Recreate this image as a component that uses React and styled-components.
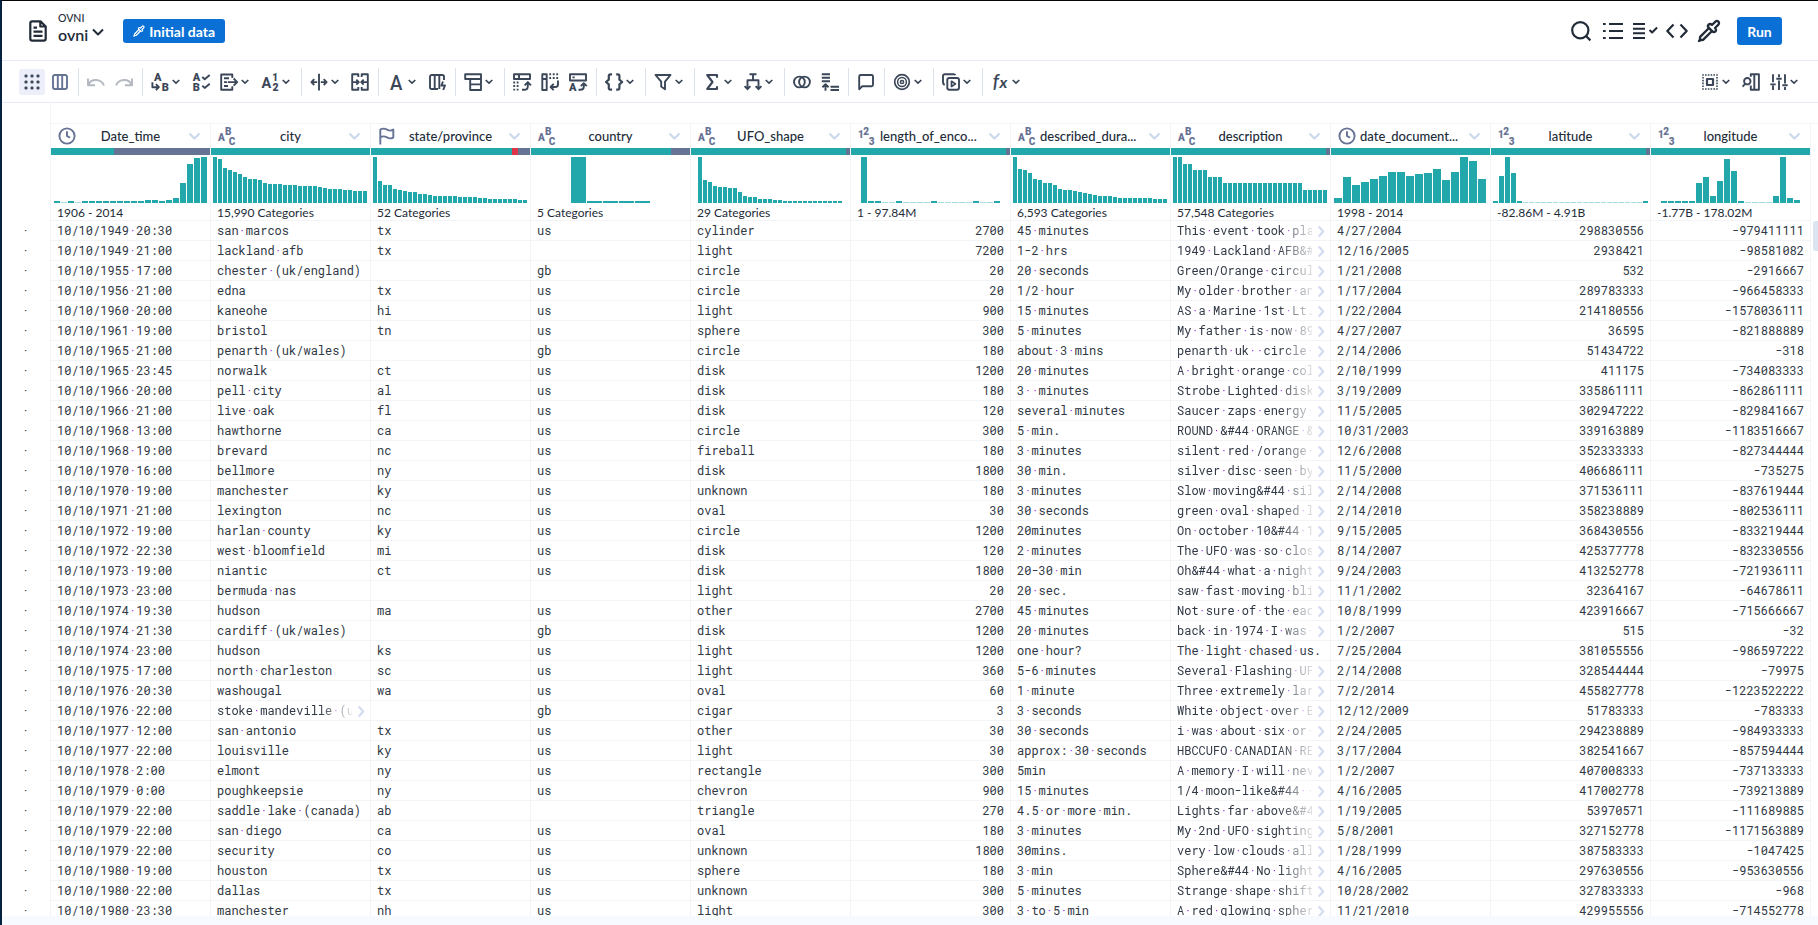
import React from "react";
import styled, { createGlobalStyle } from "styled-components";
import { Pipette } from "lucide-react";

const GlobalStyle = createGlobalStyle`
  * { box-sizing: border-box; }
  body { margin: 0; background: #fff; overflow: hidden; }
`;

const color = {
  ink: "#222b38",
  tool: "#3b4758",
  slate: "#667394",
  teal: "#22a8ab",
  red: "#dc3547",
  line: "#f3f4f7",
  rule: "#e6ebf5",
  blue: "#0b70d5",
};

const Page = styled.div`
  display: flex;
  flex-direction: column;
  width: 1818px;
  height: 925px;
  border-top: 1px solid #05060a;
  border-left: 2px solid #04223f;
  background: #fff;
  color: ${color.ink};
  font-family: Lato, "Liberation Sans", sans-serif;
  overflow: hidden;
`;

const Header = styled.header`
  display: flex;
  align-items: center;
  height: 60px;
  padding: 1px 36px 0 27px;
  border-bottom: 1px solid ${color.rule};
`;

const Titles = styled.div`
  display: flex;
  flex-direction: column;
  margin-left: 11px;
  padding-bottom: 6px;
`;

const Project = styled.span`
  font-size: 10.5px;
  font-weight: 500;
  line-height: 14px;
`;

const FileName = styled.span`
  display: flex;
  align-items: center;
  gap: 4px;
  height: 20px;
  font-size: 16px;
  font-weight: 600;
  line-height: 20px;

  svg { margin: -7px 1px 0 0; }
`;

const Button = styled.button`
  display: flex;
  align-items: center;
  justify-content: center;
  gap: 4px;
  width: ${(p) => p.$width}px;
  height: ${(p) => p.$height}px;
  margin-left: ${(p) => p.$left}px;
  padding: 0;
  border: 0;
  border-radius: 3px;
  background: ${color.blue};
  color: #fff;
  font: 700 ${(p) => p.$size || 14}px Lato, sans-serif;
`;

const Spacer = styled.div`
  flex: 1;
`;

const Toolbar = styled.nav`
  display: flex;
  align-items: center;
  height: 42px;
  padding: 1px 20px 0 17px;
  border-bottom: 1px solid ${color.rule};
`;

const ActiveTool = styled.div`
  display: flex;
  align-items: center;
  justify-content: center;
  width: 26px;
  height: 26px;
  border-radius: 3px;
  background: #eceffa;
`;

const Divider = styled.i`
  width: 1px;
  height: 28px;
  margin-left: ${(p) => p.$left}px;
  background: #dbe2ee;
`;

const Glyph = styled.svg`
  flex: none;
  display: block;
  overflow: visible;
  margin-left: ${(p) => p.$left || 0}px;
  fill: none;
  stroke: ${(p) => p.$color || color.tool};
  stroke-width: ${(p) => p.$stroke || 1.9};
  stroke-linejoin: round;

  text {
    fill: ${(p) => p.$color || color.tool};
    stroke: none;
    font-family: Roboto, "Liberation Sans", sans-serif;
    font-weight: 900;
    font-size: 11px;
  }
`;

const Sheet = styled.main`
  display: flex;
  height: 813px;
  overflow: hidden;
`;

const Grid = styled.div`
  width: 1809px;
`;

const Band = styled.div`
  height: 20px;
  margin-left: 48px;
  border-left: 1px solid ${color.line};
`;

const HeadRow = styled.div`
  display: flex;
  padding-left: 48px;
`;

const ColumnHead = styled.div`
  flex: none;
  width: 160px;
  border-left: 1px solid ${color.line};
  border-top: 1px solid ${color.line};
`;

const TitleRow = styled.div`
  display: flex;
  align-items: center;
  height: 24px;
  padding-left: 7px;
`;

const ColumnName = styled.span`
  width: 101px;
  margin: 0 7px 0 4px;
  white-space: nowrap;
  text-align: ${(p) => (p.$cut ? "left" : "center")};
  font-size: 13px;
  font-weight: 500;
  line-height: 20px;
`;

const Quality = styled.div`
  display: flex;
  height: 7px;
`;

const QualityPart = styled.i`
  flex: ${(p) => p.$size} 0 0;
  background: ${(p) => color[p.$kind]};
`;

const Chart = styled.div`
  display: flex;
  align-items: flex-end;
  gap: 1px;
  height: 48px;
  padding-left: ${(p) => p.$left}px;
`;

const ChartBar = styled.i`
  width: ${(p) => p.$width}px;
  height: ${(p) => p.$value || 1}px;
  background: ${(p) => (p.$value ? color.teal : "#a6dcdd")};
`;

const Summary = styled.div`
  height: 17px;
  padding-left: 6px;
  font-size: 12px;
  line-height: 20px;
  white-space: nowrap;
`;

const Row = styled.div`
  display: flex;
  height: 20px;
  font: 12px/18px "Roboto Mono", "Liberation Mono", monospace;
  color: #303845;
`;

const Gutter = styled.div`
  flex: none;
  width: 48px;
  padding: 1px 0 0 20px;
`;

const Cell = styled.div`
  flex: none;
  display: flex;
  align-items: center;
  justify-content: ${(p) => (p.$numeric ? "flex-end" : "flex-start")};
  width: 160px;
  height: 20px;
  padding: 0 6px 1px;
  border-left: 1px solid ${color.line};
  border-top: 1px solid ${color.line};
  white-space: nowrap;
`;

const EndLine = styled.i`
  flex: none;
  width: 1px;
  background: ${color.line};
`;

const Faded = styled.span`
  width: 135px;
  margin-right: 6px;
  overflow: hidden;
  mask-image: linear-gradient(to right, #000 102px, rgba(0, 0, 0, 0.15) 135px);
`;

const SpaceDot = styled.span`
  color: #a030f5;
`;

const Track = styled.div`
  flex: 1;
  padding: 118px 0 0 2px;
  background: linear-gradient(${color.line}, ${color.line}) 0 20px / 100% 1px no-repeat;
`;

const Thumb = styled.div`
  height: 30px;
  border-radius: 3px 0 0 3px;
  background: #dde4f1;
`;

const Footer = styled.footer`
  flex: 1;
  background: #f7faff;
`;

function Chevron({ left }) {
  return (
    <Glyph $left={left} width="8" height="8" viewBox="0 0 8 8" $stroke={1.7}>
      <path d="M.7 2 4 5.1 7.3 2" />
    </Glyph>
  );
}

const icons = {
  dots: [2, 8, 14].flatMap((y) => [2, 8, 14].map((x) => <rect key={x + "-" + y} x={x + 0.2} y={y + 0.2} width="1.6" height="1.6" rx=".5" strokeWidth="1.5" />)),
  columns: <path d="M4 2h10a2 2 0 0 1 2 2v10a2 2 0 0 1-2 2H4a2 2 0 0 1-2-2V4a2 2 0 0 1 2-2zM6.8 2v14M11.2 2v14" />,
  undo: <path d="M1 5.5v6.7h7M1.4 11.8C4 5.2 14 5.2 17 12.5" />,
  redo: <path d="M17 5.5v6.7h-7M16.6 11.8C14 5.2 4 5.2 1 12.5" />,
  rename: (
    <>
      <text x="3" y="8">A</text>
      <text x="10.8" y="17.7">B</text>
      <path d="M1.4 9.2v5h6M4.9 11.2l3 3-3 3" />
    </>
  ),
  retype: (
    <>
      <text x=".8" y="8">A</text>
      <text x=".8" y="17.7">B</text>
      <path d="m10.3 4 2.4 2.2 5-4.2M10.3 12.7l2.4 2.2 5-4.2" />
    </>
  ),
  extract: <path d="M12.3 5V1.5H1.2v15.3h11.1v-3.5M4 5.3h5M4 9.1h3M4 13h4M7.8 9.1h9M13.6 5.5l3.6 3.6-3.6 3.6" />,
  order: (
    <>
      <text x="-.4" y="15" style={{ fontSize: 14.5, fontWeight: 700 }}>A</text>
      <text x="10.2" y="8" style={{ fontSize: 10 }}>1</text>
      <text x="10.4" y="17.6" style={{ fontSize: 10.5 }}>2</text>
    </>
  ),
  split: <path d="M9 .7v16.8M7.2 9.1H1.5M4.3 6.2 1.4 9.1 4.3 12M10.8 9.1h5.7M13.7 6.2l2.9 2.9-2.9 2.9" />,
  merge: <path d="M7.3 4V1.3H1.2v15.5h6.1v-2.7M10.7 4V1.3h6.1v15.5h-6.1v-2.7M1.5 9.1h6M5.3 6.6 7.8 9.1l-2.5 2.5M16.5 9.1h-6M12.7 6.6l-2.5 2.5 2.5 2.5" />,
  text: <text x="3" y="16.8" textLength="12.4" lengthAdjust="spacingAndGlyphs" style={{ fontSize: 21, fontWeight: 500 }}>A</text>,
  enrich: <path d="M10 16H3.8A1.8 1.8 0 0 1 2 14.2V3.8A1.8 1.8 0 0 1 3.8 2h10.4A1.8 1.8 0 0 1 16 3.8V7M6.7 2v14M11.3 2v14M15 8.5l-1.6 4h3.6L15.2 17" />,
  rows: <path d="M1.2 1.2h15.8v4.8H1.2zM6.2 6h10.8v5.4H6.2zM6.2 11.4h10.8v5.6H6.2z" />,
  unpivot: (
    <>
      <path d="M1 1.3h16v4.7H1zM6 1.3V6" />
      <path d="M9 16.8h2.2q3.6 0 3.6-3.3V9.5M11.6 12.3l3.2-3.2 3.2 3.2" />
      <path d="M.3 9.5h6.5M.3 13h6.5M.3 16.6h6.5" strokeDasharray="1.8 1.6" />
    </>
  ),
  pivot: (
    <>
      <path d="M1.3 1.3h4.4v15.7H1.3zM1.3 6h4.4" />
      <path d="M8.3 1.3h9.7M8.3 5h9.7" strokeDasharray="1.8 1.7" />
      <path d="M17 7.5V11.2q0 2.8-2.8 2.8H10M12.7 10.9l-3.1 3.1 3.1 3.1" />
    </>
  ),
  header: (
    <>
      <path d="M1 1.3h16v6.2H1zM3.5 4.4h2.2" />
      <text x="0" y="17.6">A</text>
      <path d="M9.5 16.8h1.9q3.4 0 3.4-3v-3M11.8 13.2l3-3 3 3" />
    </>
  ),
  braces: <path d="M7 1.3H5.5Q3.8 1.3 3.8 3v3.7L1 9l2.8 2.3V15q0 1.7 1.7 1.7H7M11.2 1.3h1.5q1.7 0 1.7 1.7v3.7L17.2 9l-2.8 2.3V15q0 1.7-1.7 1.7h-1.5" strokeWidth="2.2" />,
  filter: <path d="M1.5 2h15L11 8.7v7.6L7.2 13.5V8.7z" />,
  sigma: <path d="M14 4.7V2H4.2l5.3 7-5.3 7H14v-2.7" strokeWidth="2.1" />,
  tree: <path d="M5.5 1.2h7M9 1.2v6M3.5 15.5V7.2h11v8.3M.6 13.2l2.9 3 2.9-3M11.6 13.2l2.9 3 2.9-3" />,
  join: (
    <>
      <circle cx="6.4" cy="9" r="5.4" />
      <circle cx="11.5" cy="9" r="5.4" />
    </>
  ),
  union: <path d="M.8 1.2h8.2M.8 4.7h8.2M.8 8.2h8.2M4.5 17.7v-6M1.4 14.3l3.1-3 3.1 3M9.5 13.7h8.5M9.5 17h8.5" />,
  comment: <path d="M2.2 16.2V3.5Q2.2 2 3.7 2h10.8q1.5 0 1.5 1.5v8.3q0 1.5-1.5 1.5H5.3z" />,
  target: (
    <>
      <circle cx="9" cy="9" r="7.3" strokeWidth="1.7" />
      <circle cx="9" cy="9" r="4.4" strokeWidth="1.5" />
      <circle cx="9" cy="9" r="1.6" strokeWidth="1.5" />
    </>
  ),
  play: (
    <>
      <path d="M2.8 11.7Q1 11.3 1 9.5V3q0-1.8 1.8-1.8h8.9q1.2 0 1.7 1" />
      <rect x="5.3" y="5" width="11.7" height="11.8" rx="2" />
      <path d="M9.5 8.3v5.2l4-2.6z" strokeWidth="1.7" />
    </>
  ),
  formula: (
    <>
      <text x="1.8" y="14.5" style={{ fontFamily: "Lato", fontSize: 19, fontWeight: 600, fontStyle: "italic" }}>f</text>
      <text x="8.5" y="15" style={{ fontFamily: "Lato", fontSize: 16, fontWeight: 700, fontStyle: "italic" }}>x</text>
    </>
  ),
  select: (
    <>
      <path d="M1.2 2h16M1.2 16h16M2 1.2v16M16 1.2v16" strokeDasharray="1.6 1.2" strokeWidth="1.6" />
      <rect x="6" y="6" width="6" height="6" strokeWidth="2.2" />
    </>
  ),
  findColumn: (
    <>
      <circle cx="5.3" cy="8.2" r="3.2" />
      <path d="M3 10.7.7 13.8M8.8 3.8V1.3h8.1v15.5H8.8v-4.3M12.3 1.3v15.5" />
    </>
  ),
  sliders: <path d="M3 1.2v8M3 12.5v4.5M.3 11.4h5.4M9 1.2v3M9 7.5V17M6.3 5.7h5.4M15 1.2v9.2M15 14v3M12.3 12.2h5.4" />,
};

// [icon, left margin, margin before its dropdown chevron]; "|" marks a divider.
const TOOLS = [
  ["|", 9], ["undo", 8], ["redo", 10],
  ["|", 9], ["rename", 8, 3], ["retype", 12], ["extract", 10, 3], ["order", 13, 2],
  ["|", 11], ["split", 8, 3], ["merge", 12],
  ["|", 9], ["text", 8, 3], ["enrich", 12],
  ["|", 9], ["rows", 8, 3],
  ["|", 11], ["unpivot", 8], ["pivot", 10], ["header", 10],
  ["|", 9], ["braces", 8, 3],
  ["|", 11], ["filter", 8, 3],
  ["|", 11], ["sigma", 8, 3], ["tree", 12, 3],
  ["|", 11], ["join", 8], ["union", 10],
  ["|", 9], ["comment", 8],
  ["|", 9], ["target", 8, 3],
  ["|", 11], ["play", 8, 3],
  ["|", 11], ["formula", 8, 3],
];

function Tool({ name, left, chevron, tint }) {
  return (
    <>
      <Glyph $left={left} $color={tint} width="18" height="18" viewBox="0 0 18 18">{icons[name]}</Glyph>
      {chevron != null && <Chevron left={chevron} />}
    </>
  );
}

const typeIcons = {
  date: <><circle cx="9" cy="9" r="7.6" /><path d="M9 4.3V9l3 1.6" /></>,
  flag: <path d="M2.3 17.5V2.6Q5.5.6 9 2.6t6.3 0v7.8Q12.5 12.4 9 10.4t-6.7 0" />,
  text: <><text x="0" y="14">A</text><text x="7" y="7.6">B</text><text x="10.8" y="17.5">C</text></>,
  number: <><text x="0" y="11">1</text><text x="5.3" y="7.6">2</text><text x="10.7" y="17.5">3</text></>,
};

const TypeGlyph = styled(Glyph)`
  text { font-size: 10px; }
`;

const fill = (n, v) => Array(n).fill(v);

const COLUMNS = [
  { name: "Date_time", type: "date", parts: [["teal", 63], ["slate", 96]], left: 3, bar: 6, label: "1906 - 2014",
    values: [2, 0, 2, 0, ...fill(9, 2), 3, 3, 2, 3, 5, 20, 39, 45, 46] },
  { name: "city", type: "text", parts: [["teal", 159]], left: 2, bar: 4, label: "15,990 Categories",
    values: [46, 44, 35, 33, 31, 29, 26, 24, 24, 23, 20, 19, 19, 19, 18, 18, 18, 17, 17, 17, 17, 16, 15, 14, 14, 14, 13, 13, 12, 12, 12] },
  { name: "state/province", type: "flag", parts: [["teal", 141], ["red", 6], ["slate", 12]], left: 2, bar: 4, label: "52 Categories",
    values: [46, 22, 18, 18, 14, 13, 12, 11, 11, 9, 9, 8, ...fill(5, 7), ...fill(4, 6), 5, 5, ...fill(6, 4), 3, 3] },
  { name: "country", type: "text", parts: [["teal", 140], ["slate", 19]], left: 40, bar: 15, label: "5 Categories",
    values: [46, 2, 2, 2, 2] },
  { name: "UFO_shape", type: "text", parts: [["teal", 155], ["slate", 4]], left: 7, bar: 4, label: "29 Categories",
    values: [46, 23, 21, 17, 16, 16, 15, 15, 11, 7, 6, 6, 4, 4, 4, 3, 3, ...fill(12, 2)] },
  { name: "length_of_enco...", cut: true, numeric: true, type: "number", parts: [["teal", 155], ["slate", 4]], left: 10, bar: 6, label: "1 - 97.84M",
    values: [46, 2, 2, 0, 0, 2, 0, 0, 0, 0, 2, 0, 0, 0, 0, 0, 2, 0, 0, 2] },
  { name: "described_dura...", cut: true, type: "text", parts: [["teal", 159]], left: 2, bar: 4, label: "6,593 Categories",
    values: [46, 34, 33, 30, 24, 23, 20, 20, 18, 14, 13, 13, 12, 11, 10, 9, 8, 7, 7, 7, 6, ...fill(7, 5), 4, 4, 4] },
  { name: "description", type: "text", parts: [["teal", 155], ["slate", 4]], left: 2, bar: 4, label: "57,548 Categories",
    values: [46, 46, 39, 39, 33, 33, 33, 26, 26, 26, ...fill(16, 20), ...fill(5, 13)] },
  { name: "date_document...", cut: true, type: "date", parts: [["teal", 159]], left: 3, bar: 8, label: "1998 - 2014",
    values: [5, 26, 18, 21, 24, 27, 31, 31, 27, 29, 30, 34, 23, 31, 46, 42, 24] },
  { name: "latitude", numeric: true, type: "number", parts: [["teal", 155], ["slate", 4]], left: 2, bar: 5, label: "-82.86M - 4.91B",
    values: [2, 27, 46, 30, 2, ...fill(20, 0), 2] },
  { name: "longitude", numeric: true, type: "number", parts: [["teal", 159]], left: 10, bar: 6, label: "-1.77B - 178.02M",
    values: [2, 2, 2, 2, 2, 20, 26, 7, 22, 44, 32, 2, 0, 0, 0, 0, 7, 46, 5, 3] },
];

// A trailing ">" marks a value that is longer than its cell.
const ROWS = `
10/10/1949 20:30|san marcos|tx|us|cylinder|2700|45 minutes|This event took pla>|4/27/2004|298830556|-979411111
10/10/1949 21:00|lackland afb|tx||light|7200|1-2 hrs|1949 Lackland AFB&#>|12/16/2005|2938421|-98581082
10/10/1955 17:00|chester (uk/england)||gb|circle|20|20 seconds|Green/Orange circul>|1/21/2008|532|-2916667
10/10/1956 21:00|edna|tx|us|circle|20|1/2 hour|My older brother an>|1/17/2004|289783333|-966458333
10/10/1960 20:00|kaneohe|hi|us|light|900|15 minutes|AS a Marine 1st Lt.>|1/22/2004|214180556|-1578036111
10/10/1961 19:00|bristol|tn|us|sphere|300|5 minutes|My father is now 89>|4/27/2007|36595|-821888889
10/10/1965 21:00|penarth (uk/wales)||gb|circle|180|about 3 mins|penarth uk  circle >|2/14/2006|51434722|-318
10/10/1965 23:45|norwalk|ct|us|disk|1200|20 minutes|A bright orange col>|2/10/1999|411175|-734083333
10/10/1966 20:00|pell city|al|us|disk|180|3  minutes|Strobe Lighted disk>|3/19/2009|335861111|-862861111
10/10/1966 21:00|live oak|fl|us|disk|120|several minutes|Saucer zaps energy >|11/5/2005|302947222|-829841667
10/10/1968 13:00|hawthorne|ca|us|circle|300|5 min.|ROUND &#44 ORANGE &>|10/31/2003|339163889|-1183516667
10/10/1968 19:00|brevard|nc|us|fireball|180|3 minutes|silent red /orange >|12/6/2008|352333333|-827344444
10/10/1970 16:00|bellmore|ny|us|disk|1800|30 min.|silver disc seen by>|11/5/2000|406686111|-735275
10/10/1970 19:00|manchester|ky|us|unknown|180|3 minutes|Slow moving&#44 sil>|2/14/2008|371536111|-837619444
10/10/1971 21:00|lexington|nc|us|oval|30|30 seconds|green oval shaped l>|2/14/2010|358238889|-802536111
10/10/1972 19:00|harlan county|ky|us|circle|1200|20minutes|On october 10&#44 1>|9/15/2005|368430556|-833219444
10/10/1972 22:30|west bloomfield|mi|us|disk|120|2 minutes|The UFO was so clos>|8/14/2007|425377778|-832330556
10/10/1973 19:00|niantic|ct|us|disk|1800|20-30 min|Oh&#44 what a night>|9/24/2003|413252778|-721936111
10/10/1973 23:00|bermuda nas|||light|20|20 sec.|saw fast moving bli>|11/1/2002|32364167|-64678611
10/10/1974 19:30|hudson|ma|us|other|2700|45 minutes|Not sure of the eac>|10/8/1999|423916667|-715666667
10/10/1974 21:30|cardiff (uk/wales)||gb|disk|1200|20 minutes|back in 1974 I was >|1/2/2007|515|-32
10/10/1974 23:00|hudson|ks|us|light|1200|one hour?|The light chased us.|7/25/2004|381055556|-986597222
10/10/1975 17:00|north charleston|sc|us|light|360|5-6 minutes|Several Flashing UF>|2/14/2008|328544444|-79975
10/10/1976 20:30|washougal|wa|us|oval|60|1 minute|Three extremely lar>|7/2/2014|455827778|-1223522222
10/10/1976 22:00|stoke mandeville (u>||gb|cigar|3|3 seconds|White object over B>|12/12/2009|51783333|-783333
10/10/1977 12:00|san antonio|tx|us|other|30|30 seconds|i was about six or >|2/24/2005|294238889|-984933333
10/10/1977 22:00|louisville|ky|us|light|30|approx: 30 seconds|HBCCUFO CANADIAN RE>|3/17/2004|382541667|-857594444
10/10/1978 2:00|elmont|ny|us|rectangle|300|5min|A memory I will nev>|1/2/2007|407008333|-737133333
10/10/1979 0:00|poughkeepsie|ny|us|chevron|900|15 minutes|1/4 moon-like&#44  >|4/16/2005|417002778|-739213889
10/10/1979 22:00|saddle lake (canada)|ab||triangle|270|4.5 or more min.|Lights far above&#4>|1/19/2005|53970571|-111689885
10/10/1979 22:00|san diego|ca|us|oval|180|3 minutes|My 2nd UFO sighting>|5/8/2001|327152778|-1171563889
10/10/1979 22:00|security|co|us|unknown|1800|30mins.|very low clouds all>|1/28/1999|387583333|-1047425
10/10/1980 19:00|houston|tx|us|sphere|180|3 min|Sphere&#44 No light>|4/16/2005|297630556|-953630556
10/10/1980 22:00|dallas|tx|us|unknown|300|5 minutes|Strange shape shift>|10/28/2002|327833333|-968
10/10/1980 23:30|manchester|nh|us|light|300|3 to 5 min|A red glowing spher>|11/21/2010|429955556|-714552778
`.trim().split("\n").map((line) => line.split("|"));

function Spaced({ text }) {
  return text.split(/( )/).map((part, i) => (part === " " ? <SpaceDot key={i}>·</SpaceDot> : part));
}

function DataCell({ value, numeric }) {
  if (value.endsWith(">")) {
    return (
      <Cell>
        <Faded><Spaced text={value.slice(0, -1)} /></Faded>
        <Glyph width="6" height="12" viewBox="0 0 6 12" $color="#d3ddf2" $stroke={2.2}><path d="M.7 2.6 5.2 7.5.7 12.4" /></Glyph>
      </Cell>
    );
  }
  return <Cell $numeric={numeric}><span><Spaced text={value} /></span></Cell>;
}

function ColumnHeader({ column }) {
  return (
    <ColumnHead>
      <TitleRow>
        <TypeGlyph $color={color.slate} width="18" height="18" viewBox="0 0 18 18">{typeIcons[column.type]}</TypeGlyph>
        <ColumnName $cut={column.cut}>{column.name}</ColumnName>
        <Glyph width="13" height="10" viewBox="0 0 13 10" $color="#cdd8ed" $stroke={2.2}><path d="M1.5 2.5 6.5 7.5l5-5" /></Glyph>
      </TitleRow>
      <Quality>
        {column.parts.map(([kind, size]) => <QualityPart key={kind} $kind={kind} $size={size} />)}
      </Quality>
      <Chart $left={column.left}>
        {column.values.map((v, i) => <ChartBar key={i} $value={v} $width={column.bar} />)}
      </Chart>
      <Summary>{column.label}</Summary>
    </ColumnHead>
  );
}

export default function App() {
  return (
    <>
      <GlobalStyle />
      <Page>
        <Header>
          <Glyph width="18" height="22" viewBox="0 0 18 22" $color={color.ink} $stroke={2.2}>
            <path d="M11.5 1.3H3.2q-1.9 0-1.9 1.9v15.6q0 1.9 1.9 1.9h11.6q1.9 0 1.9-1.9V6.5zM11.3 1.5v5h5M4.5 11.6h9M4.5 15.8h9M4.5 7.6h3.5" />
          </Glyph>
          <Titles>
            <Project>OVNI</Project>
            <FileName>
              ovni
              <Glyph width="12" height="8" viewBox="0 0 12 8" $color={color.ink} $stroke={2}><path d="M1 1.5 6 6.5l5-5" /></Glyph>
            </FileName>
          </Titles>
          <Button $width={102} $height={24} $left={18}>
            <Pipette size={12} strokeWidth={2.4} />
            Initial data
          </Button>
          <Spacer />
          <Glyph width="20" height="20" viewBox="0 0 20 20" $color={color.ink} $stroke={2.2}>
            <circle cx="9.3" cy="9.3" r="8.1" /><path d="m15 15 4.4 4.4" />
          </Glyph>
          <Glyph $left={12} width="20" height="18" viewBox="0 0 20 18" $color={color.ink} $stroke={2}>
            <path d="M6 2h14M6 9h14M6 16h14M0 2h2.7M0 9h2.7M0 16h2.7" />
          </Glyph>
          <Glyph $left={10} width="24" height="18" viewBox="0 0 24 18" $color={color.ink} $stroke={2}>
            <path d="M0 2h12M0 6.7h12M0 11.3h12M0 16h12M16.5 8l2.6 2.5 5-5" />
          </Glyph>
          <Glyph $left={9} width="22" height="16" viewBox="0 0 22 16" $color={color.ink} $stroke={2.2}>
            <path d="M7.5 1.5 1.3 8l6.2 6.5M14.5 1.5 20.7 8l-6.2 6.5" />
          </Glyph>
          <Glyph as={Pipette} $left={9} size={24} $color={color.ink} $stroke={2.3} />
          <Button $width={45} $height={28} $left={16}>Run</Button>
        </Header>
        <Toolbar>
          <ActiveTool><Tool name="dots" /></ActiveTool>
          <Tool name="columns" left={6} tint={color.slate} />
          {TOOLS.map(([name, left, chevron], i) =>
            name === "|" ? (
              <Divider key={i} $left={left} />
            ) : (
              <Tool key={i} name={name} left={left} chevron={chevron} tint={/do$/.test(name) ? "#b3b8c1" : undefined} />
            )
          )}
          <Spacer />
          <Tool name="select" chevron={3} />
          <Tool name="findColumn" left={12} />
          <Tool name="sliders" left={10} chevron={2} />
        </Toolbar>
        <Sheet>
          <Grid>
            <Band />
            <HeadRow>
              {COLUMNS.map((column) => <ColumnHeader key={column.name} column={column} />)}
              <EndLine />
            </HeadRow>
            {ROWS.map((cells, r) => (
              <Row key={r}>
                <Gutter>·</Gutter>
                {cells.map((value, c) => <DataCell key={c} value={value} numeric={COLUMNS[c].numeric} />)}
                <EndLine />
              </Row>
            ))}
          </Grid>
          <Track><Thumb /></Track>
        </Sheet>
        <Footer />
      </Page>
    </>
  );
}
